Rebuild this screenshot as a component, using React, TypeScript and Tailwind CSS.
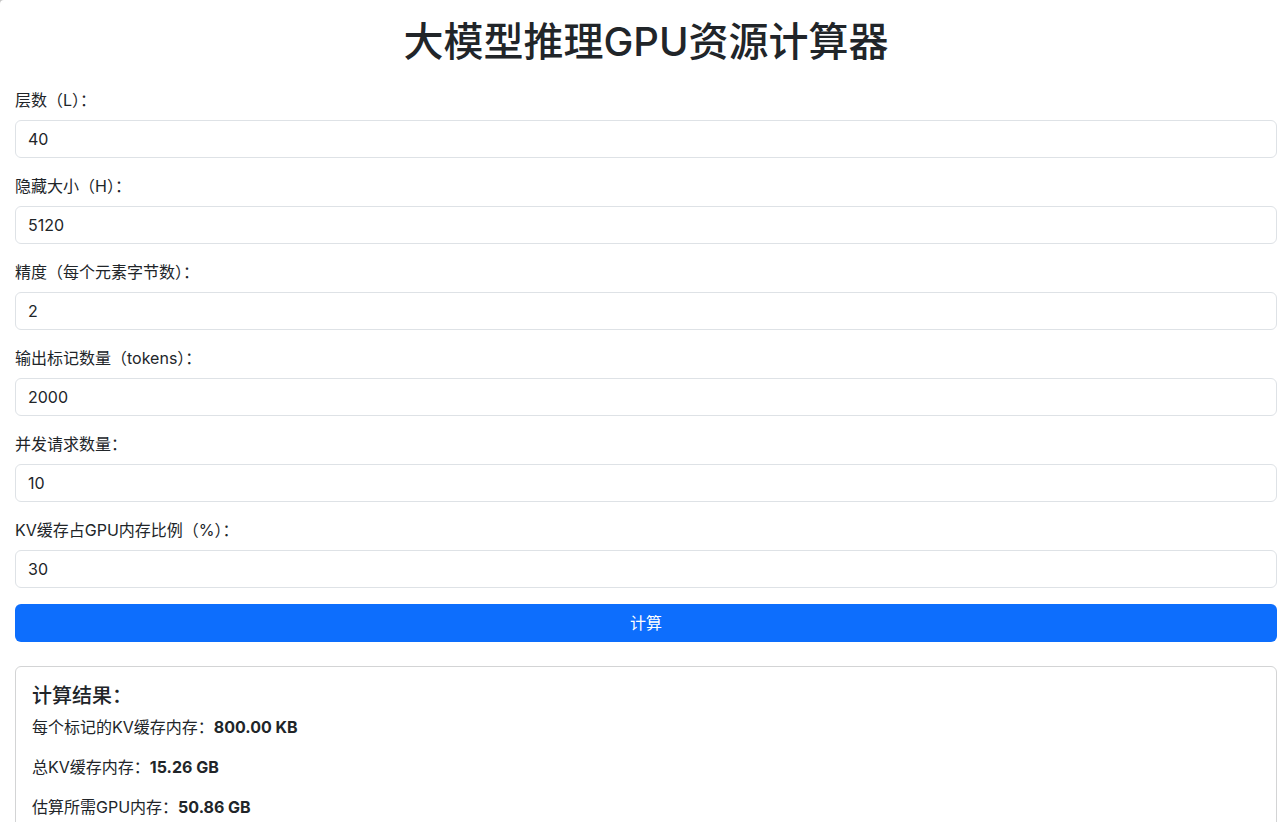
import { useState } from "react";

const fields = [
  { id: "layers", label: "层数（L）：", value: "40" },
  { id: "hidden", label: "隐藏大小（H）：", value: "5120" },
  { id: "precision", label: "精度（每个元素字节数）：", value: "2" },
  { id: "tokens", label: "输出标记数量（tokens）：", value: "2000" },
  { id: "concurrency", label: "并发请求数量：", value: "10" },
  { id: "ratio", label: "KV缓存占GPU内存比例（%）：", value: "30" },
];

type Values = Record<string, string>;

const initial: Values = Object.fromEntries(fields.map((f) => [f.id, f.value]));

function calculate(v: Values) {
  const perToken = 2 * Number(v.layers) * Number(v.hidden) * Number(v.precision);
  const total = (perToken * Number(v.tokens) * Number(v.concurrency)) / 1024 ** 3;
  return [
    { label: "每个标记的KV缓存内存：", value: `${(perToken / 1024).toFixed(2)} KB` },
    { label: "总KV缓存内存：", value: `${total.toFixed(2)} GB` },
    { label: "估算所需GPU内存：", value: `${(total / (Number(v.ratio) / 100)).toFixed(2)} GB` },
  ];
}

export default function App() {
  const [values, setValues] = useState(initial);
  const [results, setResults] = useState(() => calculate(initial));

  return (
    <div className="bg-[#c4c4c4]">
      <main
        lang="zh-CN"
        className="overflow-hidden rounded-tl-[4px] bg-white pt-[18px] pr-[7px] pl-[15px] font-['Inter','Noto_Sans_CJK_SC',sans-serif] text-base text-[#212529]"
      >
        <h1 className="mb-[22px] text-center text-[40px] leading-12 font-medium">大模型推理GPU资源计算器</h1>
        <form
          onSubmit={(e) => {
            e.preventDefault();
            setResults(calculate(values));
          }}
        >
          {fields.map((f) => (
            <div key={f.id} className="mb-4">
              <label htmlFor={f.id} className="mb-2 block leading-6">
                {f.label}
              </label>
              <input
                id={f.id}
                type="text"
                inputMode="numeric"
                value={values[f.id]}
                onChange={(e) => setValues({ ...values, [f.id]: e.target.value })}
                className="block h-[38px] w-full rounded-md border border-[#dee2e6] bg-white px-3 leading-6"
              />
            </div>
          ))}
          <button type="submit" className="block h-[38px] w-full rounded-md bg-[#0d6efd] text-white">
            计算
          </button>
        </form>
        <section className="mt-6 rounded-md border border-[#d3d4d5] p-4">
          <h2 className="mb-1.5 text-xl leading-[26px] font-medium">计算结果：</h2>
          {results.map((r) => (
            <p key={r.label} className="mb-4 leading-6">
              {r.label}
              <strong className="font-bold">{r.value}</strong>
            </p>
          ))}
        </section>
      </main>
    </div>
  );
}
